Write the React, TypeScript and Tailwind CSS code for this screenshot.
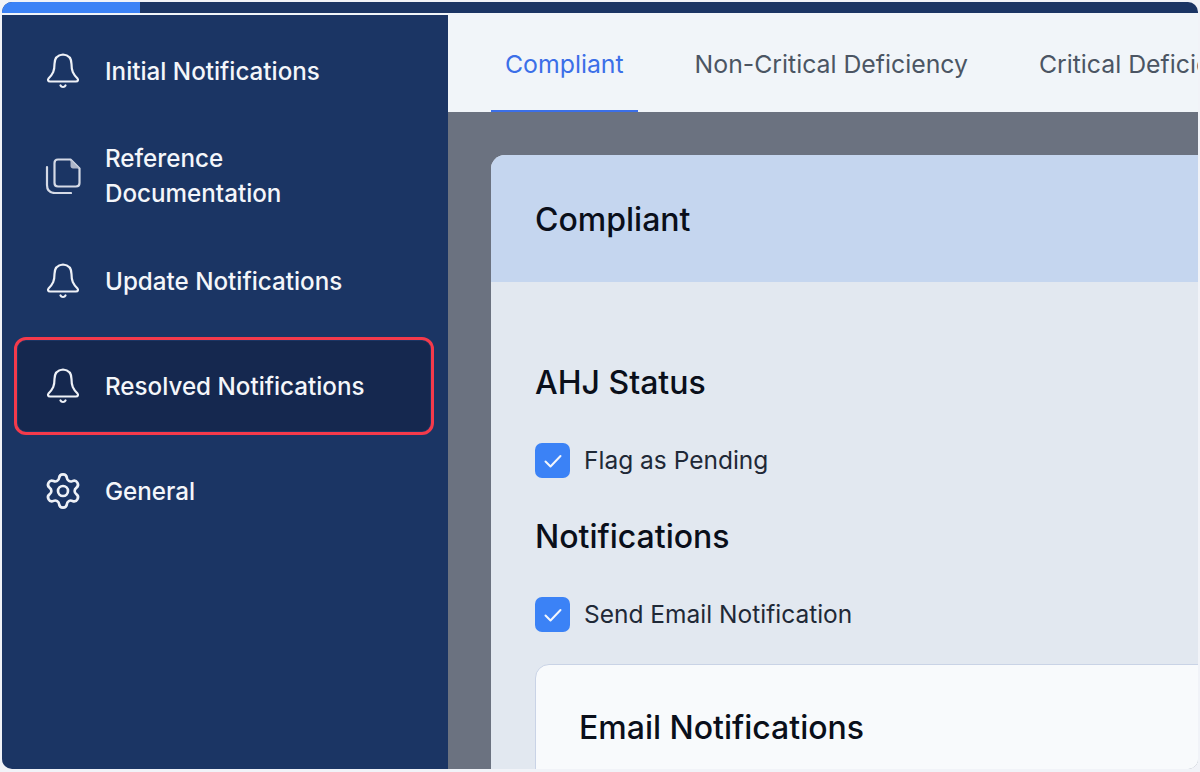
import React from "react";
import { Settings } from "lucide-react";

const font = { fontFamily: "Inter, 'Noto Sans', sans-serif" };

function BellIcon() {
  return (
    <svg width="36" height="36" viewBox="0 0 36 36" fill="none" stroke="#eef1f7" strokeWidth="2.2" strokeLinecap="round" strokeLinejoin="round" className="shrink-0">
      <path d="M18 1.5C12 2 9.5 6 9.5 11C9.5 18 8 21 3.5 25.5C2.5 27 3 28.5 5 28.5H31C33 28.5 33.5 27 32.5 25.5C28 21 26.5 18 26.5 11C26.5 6 24 2 18 1.5Z" />
      <path d="M15.5 32.5C16.5 34.5 19.5 34.5 20.5 32.5" />
    </svg>
  );
}

function DocsIcon() {
  return (
    <svg width="36" height="36" viewBox="0 0 36 36" fill="none" stroke="#d5dae6" strokeWidth="2.2" strokeLinecap="round" strokeLinejoin="round" className="shrink-0">
      <path d="M13 1.5H25.5L34.5 10.5V25C34.5 27 33 28.5 31 28.5H13C11 28.5 9.5 27 9.5 25V5C9.5 3 11 1.5 13 1.5Z" />
      <path d="M25.5 1.5L25.5 8C25.5 9.5 26.5 10.5 28 10.5H34.5Z" fill="#aeb6c9" stroke="none" />
      <path d="M2 9V27C2 32 5 35 10 35H26" />
    </svg>
  );
}

function NavItem({ icon, active, children }: { icon: React.ReactNode; active?: boolean; children: React.ReactNode }) {
  return (
    <div className={"relative flex h-[90px] items-center gap-[24px] rounded-lg pl-[27px] " + (active ? "bg-[#15284f]" : "")}>
      {active && <div className="absolute -inset-[4px] rounded-[12px] border-[3.5px] border-[#f43a4b]" />}
      {icon}
      <span className="text-[24.2px] font-medium leading-[35px] text-[#f4f6fa]">{children}</span>
    </div>
  );
}

function Check({ label }: { label: string }) {
  return (
    <div className="flex items-center gap-[14px]">
      <div className="flex h-[35px] w-[35px] items-center justify-center rounded-[7px] bg-[#3b82f6]">
        <svg width="22" height="22" viewBox="0 0 22 22" fill="none" stroke="#f3f6fc" strokeWidth="2" strokeLinecap="round" strokeLinejoin="round">
          <path d="M3.5 11.5L8.5 16.5L18.5 6" />
        </svg>
      </div>
      <span className="text-[24.5px] leading-[35px] text-[#1f2937]">{label}</span>
    </div>
  );
}

export default function App() {
  return (
    <div className="h-[772px] w-[1200px] overflow-hidden bg-[#f1f3f8] pb-[3px] pl-[2px] pr-[2px] pt-[2px]" style={font}>
      <div className="flex h-full flex-col overflow-hidden rounded-[10px] bg-[#f1f5f9]">
        <div className="h-[11px] shrink-0 bg-[#1b3564]">
          <div className="h-full w-[138px] bg-[#3b82f6]" />
        </div>
        <div className="flex min-h-0 flex-1">
          <aside className="mt-[2px] flex w-[446px] shrink-0 flex-col gap-[15px] bg-[#1b3564] pl-[16px] pr-[18px] pt-[11px]">
            <NavItem icon={<BellIcon />}>Initial Notifications</NavItem>
            <NavItem icon={<DocsIcon />}>
              Reference
              <br />
              Documentation
            </NavItem>
            <NavItem icon={<BellIcon />}>Update Notifications</NavItem>
            <NavItem icon={<BellIcon />} active>
              Resolved Notifications
            </NavItem>
            <NavItem icon={<Settings size={40} strokeWidth={1.6} color="#eef1f7" className="-mx-[2px] shrink-0" />}>General</NavItem>
          </aside>
          <main className="flex min-w-0 flex-1 flex-col overflow-hidden bg-[#6b7280]">
            <nav className="flex h-[99px] shrink-0 gap-[43px] overflow-hidden whitespace-nowrap bg-[#f1f5f9] pl-[43px]">
              <div className="flex items-center border-b-2 border-[#3b6fe8] px-[14px] pt-[6px] text-[24.8px] text-[#3b6fe8]">Compliant</div>
              <div className="flex items-center border-b-2 border-transparent px-[14px] pt-[6px] text-[24.8px] text-[#4b5563]">Non-Critical Deficiency</div>
              <div className="flex items-center border-b-2 border-transparent px-[14px] pt-[6px] text-[24.8px] text-[#4b5563]">Critical Deficiency</div>
            </nav>
            <div className="min-h-0 flex-1 pl-[43px] pt-[43px]">
              <section className="w-[800px] overflow-hidden rounded-tl-[14px] bg-[#e2e8f0]">
                <header className="flex h-[127px] items-center bg-[#c5d6ef] pl-[44px] pt-[2px]">
                  <h1 className="text-[32px] font-medium text-[#0a0f1a]">Compliant</h1>
                </header>
                <div className="pl-[44px] pt-[79px]">
                  <h2 className="text-[32px] font-medium leading-[44px] text-[#0a0f1a]">AHJ Status</h2>
                  <div className="mt-[38px]">
                    <Check label="Flag as Pending" />
                  </div>
                  <h2 className="mt-[37px] text-[32px] font-medium leading-[44px] text-[#0a0f1a]">Notifications</h2>
                  <div className="mt-[38px]">
                    <Check label="Send Email Notification" />
                  </div>
                  <div className="mt-[32px] h-[200px] rounded-tl-[14px] border border-[#c9d3e6] bg-[#f8fafc] pl-[43px] pt-[43px]">
                    <h3 className="text-[32px] font-medium leading-[40px] text-[#0a0f1a]">Email Notifications</h3>
                  </div>
                </div>
              </section>
            </div>
          </main>
        </div>
      </div>
    </div>
  );
}
